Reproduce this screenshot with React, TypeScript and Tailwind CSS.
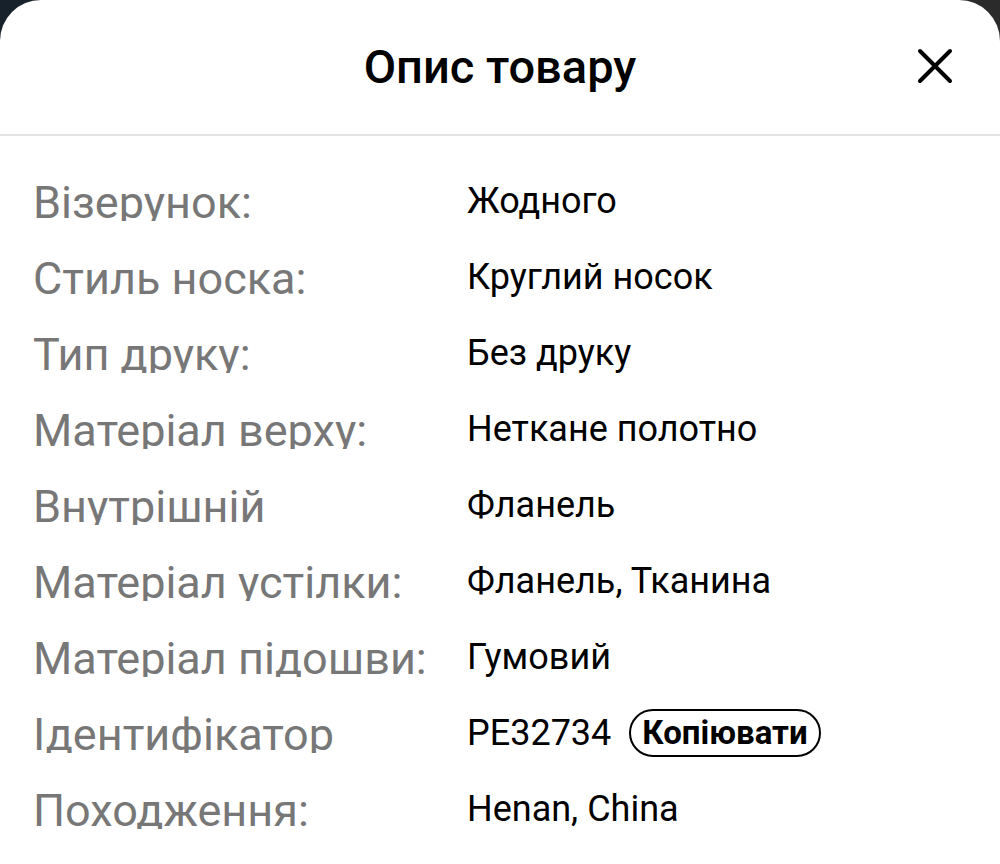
import React from "react";

const rows: { label: string; value: string; copy?: boolean }[] = [
  { label: "Візерунок:", value: "Жодного" },
  { label: "Стиль носка:", value: "Круглий носок" },
  { label: "Тип друку:", value: "Без друку" },
  { label: "Матеріал верху:", value: "Неткане полотно" },
  { label: "Внутрішній", value: "Фланель" },
  { label: "Матеріал устілки:", value: "Фланель, Тканина" },
  { label: "Матеріал підошви:", value: "Гумовий" },
  { label: "Ідентифікатор", value: "PE32734", copy: true },
  { label: "Походження:", value: "Henan, China" },
];

export default function App() {
  return (
    <div
      className="w-[1000px] h-[864px] overflow-hidden bg-gradient-to-r from-[#17212c] to-[#2b2b2b]"
      style={{ fontFamily: "Roboto, 'Noto Sans', sans-serif" }}
    >
      <div className="h-full bg-white rounded-t-[41px] flex flex-col">
        <div className="relative h-[136px] shrink-0 flex items-center justify-center border-b-2 border-[#e3e3e3]">
          <h1 className="text-[47px] font-medium text-black leading-none -mt-[2px]">Опис товару</h1>
          <button className="absolute right-[45px] top-[46px] w-[40px] h-[40px] flex items-center justify-center">
            <svg width="40" height="40" viewBox="0 0 40 40" fill="none">
              <path d="M5 5 L35 35 M35 5 L5 35" stroke="black" strokeWidth="4" strokeLinecap="round" />
            </svg>
          </button>
        </div>
        <div className="flex flex-col gap-[35px] pt-[44px] pl-[33px]">
          {rows.map((r) => (
            <div key={r.label} className="flex items-start h-[41px]">
              <div className="w-[434px] h-[41px] overflow-hidden text-[45px] leading-[45px] text-[#777777] whitespace-nowrap">
                {r.label}
              </div>
              <div className="flex items-center text-[36px] leading-[36px] text-black whitespace-nowrap pt-[3px]">
                <span>{r.value}</span>
                {r.copy && (
                  <span className="ml-[18px] -my-[6px] px-[11px] h-[48px] flex items-center rounded-full border-2 border-black font-bold text-[33px]">
                    Копіювати
                  </span>
                )}
              </div>
            </div>
          ))}
        </div>
      </div>
    </div>
  );
}
